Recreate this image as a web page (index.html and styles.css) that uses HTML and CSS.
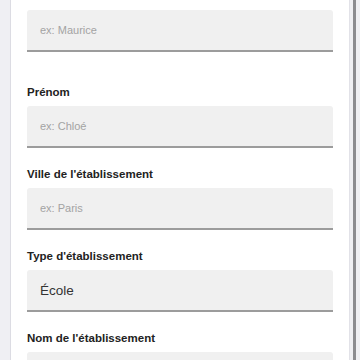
FILE: index.html
```html
<!DOCTYPE html>
<html lang="fr">
<head>
<meta charset="UTF-8">
<meta name="viewport" content="width=device-width, initial-scale=1.0">
<title>Inscription</title>
<link rel="stylesheet" href="styles.css">
</head>
<body>
<div class="page">
    <div class="gutter"></div>
    <div class="card">
        <div class="field first">
            <label for="nom">Nom</label>
            <input type="text" id="nom" placeholder="ex: Maurice">
        </div>
        <div class="field">
            <label for="prenom">Prénom</label>
            <input type="text" id="prenom" placeholder="ex: Chloé">
        </div>
        <div class="field">
            <label for="ville">Ville de l'établissement</label>
            <input type="text" id="ville" placeholder="ex: Paris">
        </div>
        <div class="field">
            <label for="type">Type d'établissement</label>
            <input type="text" id="type" class="value" value="École" readonly>
        </div>
        <div class="field">
            <label for="etab">Nom de l'établissement</label>
            <input type="text" id="etab">
        </div>
    </div>
    <div class="rail"><div class="thumb"></div></div>
</div>
</body>
</html>
```

FILE: styles.css
```css
body {
    font-family: "Liberation Sans", Arial, sans-serif;
    margin: 0;
    background-color: #efeff3;
    overflow: hidden;
}
.page {
    display: flex;
    height: 360px;
}
.gutter {
    width: 10px;
    border-right: 1px solid #dcdce3;
}
.card {
    flex: 1;
    background-color: #fff;
    padding: 0 16px;
    margin-top: -11px;
    border-right: 1px solid #e2e2e8;
}
.rail {
    width: 10px;
    display: flex;
    justify-content: center;
}
.thumb {
    width: 3px;
    background-color: #8c8c90;
    margin-left: -1px;
}
.field {
    margin-bottom: 19px;
}
.field.first {
    margin-bottom: 33px;
}
label {
    display: block;
    height: 14px;
    line-height: 14px;
    margin-bottom: 7px;
    font-size: 11.5px;
    font-weight: bold;
    color: #222;
}
input {
    display: block;
    box-sizing: border-box;
    width: 100%;
    height: 42px;
    padding: 0 13px;
    border: 0px;
    border-bottom: 2px solid #9c9c9c;
    border-radius: 3px 3px 0 0;
    background-color: #f0f0f0;
    font-family: inherit;
    font-size: 11px;
    color: #333;
    outline: none;
}
input::placeholder {
    color: #a3a3a3;
}
input.value {
    font-size: 13.5px;
    color: #333;
}
```
